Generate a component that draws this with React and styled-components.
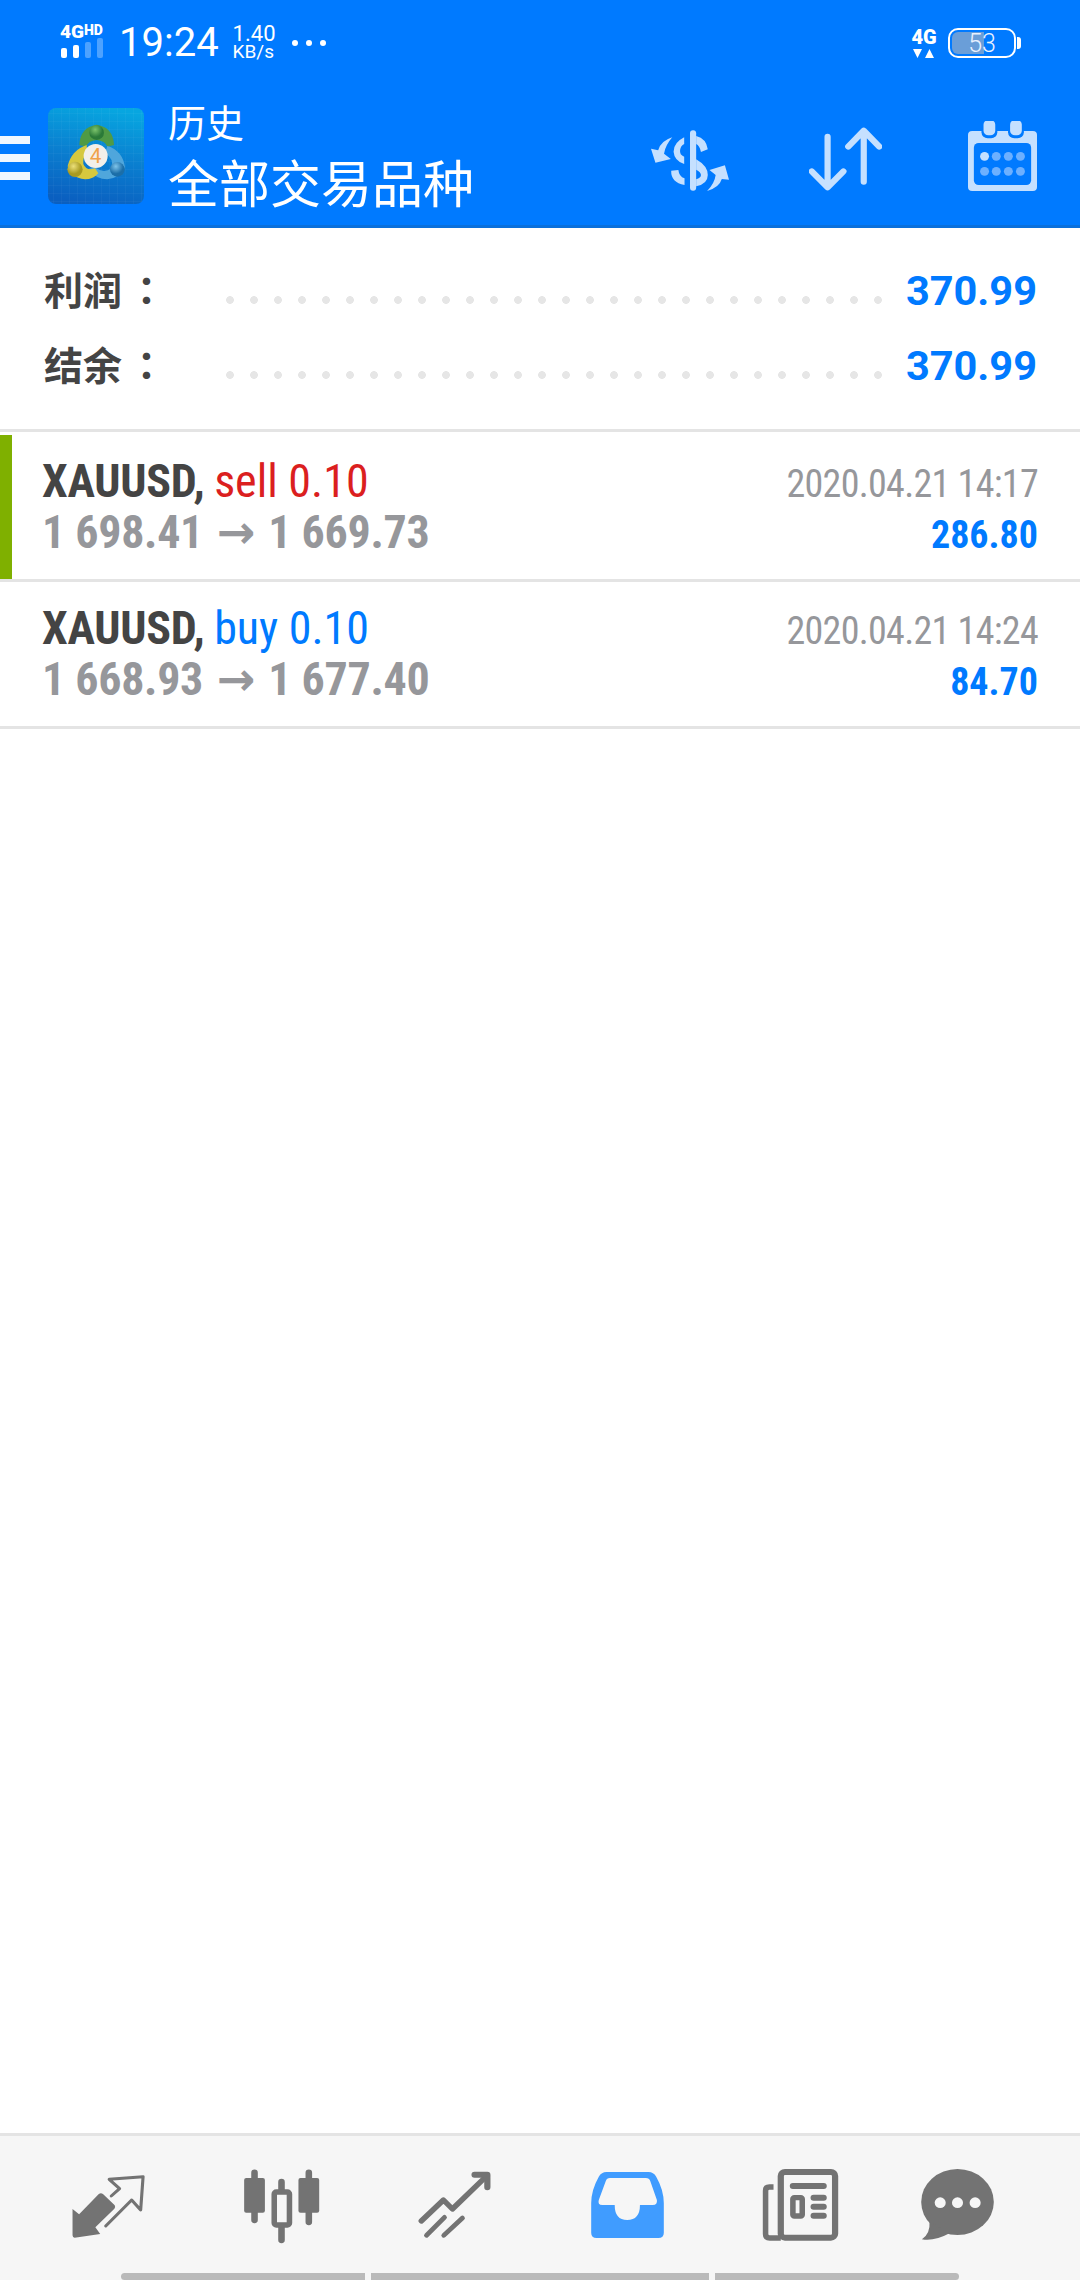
import React from 'react'
import styled, { createGlobalStyle } from 'styled-components'

const BLUE = '#007aff'
const PALE = '#c5e0ff'
const TAB_GREY = '#737373'
const TAB_BG = '#f6f6f6'

const GlobalStyle = createGlobalStyle`
  html, body {
    margin: 0;
    padding: 0;
    background: #fff;
  }
  * {
    box-sizing: border-box;
  }
`

const Screen = styled.div`
  width: 1080px;
  height: 2280px;
  display: flex;
  flex-direction: column;
  overflow: hidden;
  background: #fff;
  font-family: Roboto, "Noto Sans CJK SC", sans-serif;
`

const Header = styled.header`
  background: ${BLUE};
  color: #fff;
  border-bottom: 3px solid #0a70dc;
`

const StatusBar = styled.div`
  height: 86px;
  display: flex;
  align-items: center;
  padding: 0 64px 0 60px;
`

const Network = styled.div`
  width: 46px;
  display: flex;
  flex-direction: column;
  margin-top: -6px;
`

const NetworkLabel = styled.div`
  height: 16px;
  font-size: 19px;
  line-height: 16px;
  font-weight: 900;
  white-space: nowrap;
  small {
    font-size: 14px;
    vertical-align: 3px;
  }
`

const Signal = styled.div`
  width: 44px;
  height: 20px;
  display: flex;
  align-items: flex-end;
  justify-content: space-between;
  padding: 0 1px;
`

const SignalBar = styled.span`
  width: 6px;
  height: ${p => p.$h}px;
  border-radius: 2px;
  background: ${p => (p.$on ? '#fff' : 'rgba(255, 255, 255, 0.3)')};
`

const Clock = styled.div`
  margin-left: 13px;
  font-size: 40px;
  line-height: 1;
`

const Speed = styled.div`
  margin-left: 14px;
  margin-top: -3px;
  display: flex;
  flex-direction: column;
  font-size: 22px;
  line-height: 21px;
  small {
    font-size: 19px;
    line-height: 16px;
  }
`

const More = styled.div`
  margin-left: 16px;
  display: flex;
  gap: 8px;
  span {
    width: 6px;
    height: 6px;
    border-radius: 50%;
    background: #fff;
  }
`

const StatusRight = styled.div`
  margin-left: auto;
  display: flex;
  align-items: center;
  gap: 12px;
`

const MobileData = styled.div`
  width: 24px;
  display: flex;
  flex-direction: column;
  align-items: center;
  font-size: 20px;
  line-height: 17px;
  font-weight: 900;
  svg {
    display: block;
    margin-top: 3px;
  }
`

const Battery = styled.div`
  position: relative;
  width: 68px;
  height: 30px;
  border: 2.5px solid #fff;
  border-radius: 10px;
  display: flex;
  align-items: center;
  justify-content: center;
  font-size: 25px;
  font-weight: 300;
  color: #e8f1ff;
  &::after {
    content: '';
    position: absolute;
    right: -7px;
    top: 7px;
    width: 4px;
    height: 12px;
    border-radius: 0 3px 3px 0;
    background: #fff;
  }
`

const BatteryFill = styled.span`
  position: absolute;
  left: 2px;
  top: 2px;
  bottom: 2px;
  width: ${p => p.$level}%;
  border-radius: 6px 0 0 6px;
  background: #6a9ed8;
`

const BatteryText = styled.span`
  position: relative;
`

const NavBar = styled.div`
  height: 139px;
  display: flex;
  align-items: center;
`

const Burger = styled.div`
  width: 30px;
  display: flex;
  flex-direction: column;
  gap: 10px;
  margin-top: 5px;
  span {
    height: 8px;
    background: #f0f7ff;
  }
`

const Logo = styled.svg`
  display: block;
  width: 96px;
  height: 96px;
  margin-left: 18px;
`

const Titles = styled.div`
  margin-left: 24px;
  display: flex;
  flex-direction: column;
  gap: 7px;
  font-family: "Noto Sans CJK SC", sans-serif;
`

const Subtitle = styled.div`
  font-size: 38px;
  line-height: 44px;
`

const Title = styled.div`
  font-size: 51px;
  line-height: 62px;
`

const Actions = styled.div`
  margin-left: auto;
  display: flex;
  align-items: center;
  padding-right: 43px;
  gap: 80px;
`

const ActionIcon = styled.svg`
  display: block;
  width: ${p => p.$w}px;
  height: 70px;
  margin-right: ${p => p.$after || 0}px;
  fill: ${PALE};
  stroke-linecap: round;
  stroke-linejoin: round;
`

const Summary = styled.section`
  padding: 25px 43px 26px 44px;
  border-bottom: 3px solid #e4e4e4;
`

const SummaryRow = styled.div`
  height: 75px;
  display: flex;
  align-items: center;
`

const SummaryLabel = styled.div`
  width: 174px;
  margin-top: -5px;
  font-family: "Noto Sans CJK SC", sans-serif;
  font-size: 39px;
  font-weight: 700;
  color: #444;
  white-space: nowrap;
`

const Colon = styled.span`
  margin-left: 5px;
  font-family: "Noto Sans CJK TC", sans-serif;
`

const Leader = styled.div`
  width: 672px;
  height: 8px;
  margin-top: 18px;
  background: radial-gradient(circle, #e6e6e6 3.6px, transparent 4.1px) 0 0 / 24px 8px repeat-x;
`

const SummaryValue = styled.div`
  margin-left: auto;
  font-size: 41.5px;
  font-weight: 700;
  color: ${BLUE};
`

const Trades = styled.section`
  padding-top: 3px;
`

const Trade = styled.article`
  position: relative;
  height: 147px;
  padding: 21px 42px 0;
  border-bottom: 3px solid #e4e4e4;
  display: flex;
  justify-content: space-between;
  font-family: "Roboto Condensed", Roboto, sans-serif;
  font-stretch: 75%;
`

const TradeMark = styled.span`
  position: absolute;
  left: 0;
  top: 0;
  bottom: 0;
  width: 12px;
  background: #7fb000;
`

const TradeCol = styled.div`
  display: flex;
  flex-direction: column;
  align-items: ${p => (p.$right ? 'flex-end' : 'flex-start')};
`

const TradeLine = styled.div`
  height: 51px;
  line-height: 51px;
  font-size: 46px;
  white-space: nowrap;
`

const Symbol = styled.b`
  font-weight: 700;
  letter-spacing: -0.3px;
  color: #444;
  margin-right: -1px;
`

const Side = styled.span`
  color: ${p => p.$color};
`

const Prices = styled.span`
  font-weight: 700;
  letter-spacing: -0.3px;
  color: #96979b;
`

const Arrow = styled.span`
  margin: 0 13px 0 14px;
  font-family: "DejaVu Sans", sans-serif;
  font-stretch: normal;
  font-size: 46px;
`

const TradeTime = styled.div`
  height: 51px;
  line-height: 57px;
  font-size: 38px;
  letter-spacing: -0.7px;
  color: #96979b;
`

const TradeProfit = styled.div`
  height: 51px;
  line-height: 57px;
  font-size: 38px;
  font-weight: 700;
  color: ${BLUE};
`

const Spacer = styled.div`
  flex: 1;
`

const TabBar = styled.nav`
  background: ${TAB_BG};
  border-top: 3px solid #e4e4e4;
`

const Tabs = styled.div`
  height: 137px;
  display: grid;
  grid-template-columns: repeat(5, 173px) 141px;
  padding-left: 22px;
  align-items: center;
  justify-items: center;
`

const TabIcon = styled.svg`
  display: block;
  width: 83px;
  height: 80px;
  fill: ${TAB_GREY};
  stroke-linecap: round;
  stroke-linejoin: round;
`

const Scroller = styled.div`
  height: 7px;
  padding-left: 121px;
  display: flex;
  gap: 6px;
`

const ScrollPiece = styled.span`
  width: ${p => p.$w}px;
  background: #bababa;
  border-radius: ${p => p.$round};
`

const MetaLogo = () => (
  <Logo viewBox="54 54 288 288">
    <defs>
      <linearGradient id="tile" x1="0.6" y1="0" x2="0.4" y2="1">
        <stop offset="0" stopColor="#07a6e0" />
        <stop offset="0.5" stopColor="#0a7fd0" />
        <stop offset="1" stopColor="#0a5fc0" />
      </linearGradient>
      <pattern id="mesh" width="24" height="24" patternUnits="userSpaceOnUse">
        <path d="M24 0V24H0" fill="none" stroke="#fff" strokeOpacity="0.09" strokeWidth="2" />
      </pattern>
      <radialGradient id="greenBall" cx="0.4" cy="0.3">
        <stop offset="0" stopColor="#7cc46c" />
        <stop offset="1" stopColor="#2b7a38" />
      </radialGradient>
      <radialGradient id="yellowBall" cx="0.4" cy="0.3">
        <stop offset="0" stopColor="#ece07a" />
        <stop offset="1" stopColor="#a89a20" />
      </radialGradient>
      <radialGradient id="blueBall" cx="0.4" cy="0.3">
        <stop offset="0" stopColor="#7fc4ea" />
        <stop offset="1" stopColor="#1b6ea8" />
      </radialGradient>
    </defs>
    <rect x="54" y="54" width="288" height="288" rx="24" fill="url(#tile)" />
    <rect x="54" y="54" width="288" height="288" rx="24" fill="url(#mesh)" />
    {/* three figures around the badge */}
    <path d="M200 104Q250 112 252 165L232 170Q225 152 200 150Q175 152 168 170L148 165Q150 112 200 104Z" fill="#4f9a45" />
    <path d="M232 168Q278 182 285 232Q275 262 232 268Q200 268 172 238L195 232Q220 252 245 235Q252 205 225 190Z" fill="#4fa6dc" />
    <path d="M170 165Q125 180 113 228Q120 262 165 268Q190 268 205 250L195 235Q170 245 160 222Q158 200 172 190Z" fill="#d6c83e" />
    <circle cx="200" cy="128" r="22" fill="url(#greenBall)" />
    <circle cx="135" cy="238" r="23" fill="url(#yellowBall)" />
    <circle cx="262" cy="238" r="22" fill="url(#blueBall)" />
    <circle cx="197" cy="198" r="36" fill="#f3efe9" />
    <text x="197" y="220" textAnchor="middle" fontFamily="Roboto, sans-serif" fontSize="62" fill="#f0a24a">4</text>
  </Logo>
)

const DollarIcon = () => (
  <ActionIcon $w={78} viewBox="322 343 228 210" preserveAspectRatio="none">
    <path d="M445 380V543" stroke={PALE} strokeWidth="18" />
    <path d="M454 388Q484 396 488 428L468 436Q464 416 454 412Z" />
    <path d="M419 392Q388 408 388 435Q390 462 419 472V450Q405 445 407 430Q409 417 419 412Z" />
    <path d="M454 458Q488 478 488 505Q488 532 454 539V518Q468 514 468 505Q468 496 454 489Z" />
    <path d="M381 492Q380 527 420 535V515Q404 510 402 490Z" />
    <path d="M384 392Q350 403 343 431L322 426L335 468L380 457L360 441Q364 416 384 392Z" />
    <path d="M486 553Q522 542 529 517L550 519L538 476L493 490L511 505Q508 530 486 553Z" />
  </ActionIcon>
)

const SortIcon = () => (
  <ActionIcon $w={73} $after={6} viewBox="782 353 212 210" preserveAspectRatio="none">
    <g fill="none" stroke={PALE} strokeWidth="18">
      <path d="M836 400V550M790 504L836 552L882 504" />
      <path d="M941 385V535M896 430L941 382L986 430" />
    </g>
  </ActionIcon>
)

const CalendarIcon = () => (
  <ActionIcon $w={69} viewBox="1243 360 200 210" preserveAspectRatio="none">
    <rect x="1243" y="390" width="200" height="180" rx="12" />
    <rect x="1260" y="426" width="166" height="126" rx="14" fill={BLUE} />
    <rect x="1282" y="352" width="46" height="60" rx="18" fill={BLUE} />
    <rect x="1359" y="352" width="46" height="60" rx="18" fill={BLUE} />
    <rect x="1288" y="357" width="34" height="46" rx="14" />
    <rect x="1365" y="357" width="34" height="46" rx="14" />
    <circle cx="1291" cy="466" r="13" />
    {[1325, 1360, 1395].map(x => (
      <circle key={x} cx={x} cy="466" r="13" fill="#6db0ff" />
    ))}
    {[1291, 1325, 1360, 1395].map(x => (
      <circle key={x} cx={x} cy="511" r="13" fill="#6db0ff" />
    ))}
  </ActionIcon>
)

const QuotesIcon = () => (
  <TabIcon viewBox="200 165 240 240" preserveAspectRatio="none">
    <path d="M216 297L235 313L292 252Q298 247 304 252L338 286Q341 292 337 296L282 352L296 372L222 383Q216 383 216 376Z" />
    <path
      d="M328 258L352 236L322 208L420 200L413 300L387 270L312 348"
      fill="none"
      stroke={TAB_GREY}
      strokeWidth="9"
    />
  </TabIcon>
)

const ChartIcon = () => (
  <TabIcon viewBox="697 165 240 240" preserveAspectRatio="none">
    <path d="M739 188V330M817 216V390M896 188V336" fill="none" stroke={TAB_GREY} strokeWidth="19" />
    <rect x="709" y="204" width="60" height="104" rx="6" />
    <rect x="866" y="204" width="60" height="104" rx="6" />
    <rect x="796" y="246" width="44" height="99" rx="6" fill={TAB_BG} stroke={TAB_GREY} strokeWidth="16" />
  </TabIcon>
)

const TradeIcon = () => (
  <TabIcon viewBox="1197 165 240 240" preserveAspectRatio="none">
    <g fill="none" stroke={TAB_GREY}>
      <path d="M1221 333L1285 270L1311 297L1405 203" strokeWidth="16" />
      <path d="M1375 194H1412V232" strokeWidth="18" />
      <path d="M1236 376L1288 322M1286 376L1340 324" strokeWidth="14" />
    </g>
  </TabIcon>
)

const HistoryIcon = () => (
  <TabIcon viewBox="131 165 240 240" preserveAspectRatio="none">
    <path
      fill="#409cff"
      fillRule="evenodd"
      d="M190 186H312Q326 186 334 200Q356 240 356 280V368Q356 384 340 384H162Q146 384 146 368V280Q146 240 168 200Q176 186 190 186ZM200 204H304Q314 204 317 214L336 270Q338 285 324 285H287Q287 330 250 330Q214 330 214 285H178Q164 285 168 270L188 214Q191 204 200 204Z"
    />
  </TabIcon>
)

const NewsIcon = () => (
  <TabIcon viewBox="635 165 240 240" preserveAspectRatio="none">
    <g fill="none" stroke={TAB_GREY}>
      <rect x="698" y="186" width="157" height="197" rx="12" strokeWidth="18" />
      <path d="M677 231H665Q654 231 654 242V372Q654 384 666 384H698" strokeWidth="16" strokeLinecap="butt" />
      <path d="M733 228H822M793 263H822M793 290H822M793 317H822" strokeWidth="18" />
      <rect x="733" y="263" width="27" height="55" rx="4" strokeWidth="16" />
    </g>
  </TabIcon>
)

const ChatIcon = () => (
  <TabIcon viewBox="1093 165 240 240" preserveAspectRatio="none">
    <ellipse cx="1213" cy="276" rx="105" ry="99" />
    <path d="M1132 335Q1135 370 1110 388Q1145 395 1190 370Z" />
    {[1163, 1213, 1264].map(x => (
      <circle key={x} cx={x} cy="278" r="16" fill={TAB_BG} />
    ))}
  </TabIcon>
)

const summary = [
  { label: '利润', value: '370.99' },
  { label: '结余', value: '370.99' },
]

const trades = [
  {
    side: 'sell 0.10',
    color: '#db1f1f',
    from: '1 698.41',
    to: '1 669.73',
    time: '2020.04.21 14:17',
    profit: '286.80',
    marked: true,
  },
  {
    side: 'buy 0.10',
    color: BLUE,
    from: '1 668.93',
    to: '1 677.40',
    time: '2020.04.21 14:24',
    profit: '84.70',
  },
]

const App = () => {
  return (
    <Screen>
      <GlobalStyle />
      <Header>
        <StatusBar>
          <Network>
            <NetworkLabel>4G<small>HD</small></NetworkLabel>
            <Signal>
              <SignalBar $on $h={10} />
              <SignalBar $on $h={13} />
              <SignalBar $h={16} />
              <SignalBar $h={20} />
            </Signal>
          </Network>
          <Clock>19:24</Clock>
          <Speed>
            1.40
            <small>KB/s</small>
          </Speed>
          <More>
            <span />
            <span />
            <span />
          </More>
          <StatusRight>
            <MobileData>
              4G
              <svg width="22" height="9" viewBox="0 0 22 9" fill="#fff">
                <path d="M0 0H9L4.5 9ZM12 9H21L16.5 0Z" />
              </svg>
            </MobileData>
            <Battery>
              <BatteryFill $level={50} />
              <BatteryText>53</BatteryText>
            </Battery>
          </StatusRight>
        </StatusBar>
        <NavBar>
          <Burger>
            <span />
            <span />
            <span />
          </Burger>
          <MetaLogo />
          <Titles>
            <Subtitle>历史</Subtitle>
            <Title>全部交易品种</Title>
          </Titles>
          <Actions>
            <DollarIcon />
            <SortIcon />
            <CalendarIcon />
          </Actions>
        </NavBar>
      </Header>

      <Summary>
        {summary.map(row => (
          <SummaryRow key={row.label}>
            <SummaryLabel>
              {row.label}
              <Colon>：</Colon>
            </SummaryLabel>
            <Leader />
            <SummaryValue>{row.value}</SummaryValue>
          </SummaryRow>
        ))}
      </Summary>

      <Trades>
        {trades.map(trade => (
          <Trade key={trade.time}>
            {trade.marked && <TradeMark />}
            <TradeCol>
              <TradeLine>
                <Symbol>XAUUSD,</Symbol> <Side $color={trade.color}>{trade.side}</Side>
              </TradeLine>
              <TradeLine>
                <Prices>
                  {trade.from}<Arrow>→</Arrow>{trade.to}
                </Prices>
              </TradeLine>
            </TradeCol>
            <TradeCol $right>
              <TradeTime>{trade.time}</TradeTime>
              <TradeProfit>{trade.profit}</TradeProfit>
            </TradeCol>
          </Trade>
        ))}
      </Trades>

      <Spacer />

      <TabBar>
        <Tabs>
          <QuotesIcon />
          <ChartIcon />
          <TradeIcon />
          <HistoryIcon />
          <NewsIcon />
          <ChatIcon />
        </Tabs>
        <Scroller>
          <ScrollPiece $w={244} $round="4px 0 0 4px" />
          <ScrollPiece $w={338} />
          <ScrollPiece $w={244} $round="0 4px 4px 0" />
        </Scroller>
      </TabBar>
    </Screen>
  )
}

export default App
